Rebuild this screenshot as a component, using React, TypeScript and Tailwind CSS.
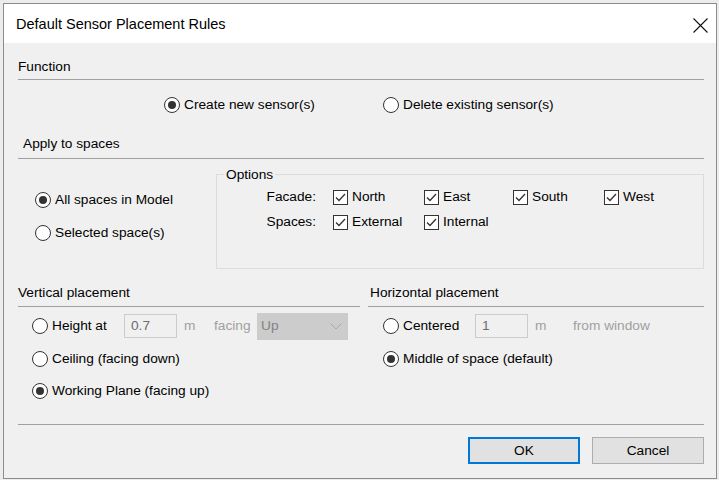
import React from "react";

function Radio({ checked, label, className = "" }: { checked?: boolean; label: string; className?: string }) {
  return (
    <div className={`flex items-center h-[18px] ${className}`}>
      <span className="w-[16px] h-[16px] rounded-full border border-[#333333] bg-white flex items-center justify-center shrink-0">
        {checked && <span className="w-[8px] h-[8px] rounded-full bg-[#333333]" />}
      </span>
      <span className="ml-[4px] whitespace-nowrap">{label}</span>
    </div>
  );
}

function Check({ label }: { label: string }) {
  return (
    <div className="flex items-center h-[18px]">
      <span className="w-[15px] h-[15px] border border-[#333333] bg-white flex items-center justify-center shrink-0">
        <svg width="13" height="13" viewBox="0 0 13 13">
          <path d="M2 6.5 L5 9.5 L11 3" fill="none" stroke="#333333" strokeWidth="1.3" />
        </svg>
      </span>
      <span className="ml-[4px] whitespace-nowrap">{label}</span>
    </div>
  );
}

function Separator({ className = "" }: { className?: string }) {
  return <div className={`h-px bg-[#a0a0a0] ${className}`} />;
}

export default function App() {
  return (
    <div
      className="w-[719px] h-[480px] bg-[#ececec] pt-[3px] pl-[3px] text-[13.7px] text-black"
      style={{ fontFamily: '"Liberation Sans", Arial, sans-serif' }}
    >
      <div className="w-[714px] h-[476px] border border-[#8c8c8c] flex flex-col">
        {/* Title bar */}
        <div className="h-[39px] bg-white flex items-center justify-between pl-[12px] pr-[8px] pt-[3px]">
          <span className="text-[14.5px]">Default Sensor Placement Rules</span>
          <svg width="15" height="15" viewBox="0 0 15 15">
            <path d="M0.5 0.5 L14.5 14.5 M14.5 0.5 L0.5 14.5" stroke="#111111" strokeWidth="1.1" />
          </svg>
        </div>

        {/* Body */}
        <div className="flex-1 bg-[#f0f0f0] pl-[14px] pr-[12px] flex flex-col leading-[18px]">
          <div className="mt-[15px]">Function</div>
          <Separator className="mt-[3px]" />
          <div className="mt-[16px] flex pl-[146px]">
            <Radio checked label="Create new sensor(s)" className="w-[219px]" />
            <Radio label="Delete existing sensor(s)" />
          </div>

          <div className="mt-[21px] pl-[5px]">Apply to spaces</div>
          <Separator className="mt-[5px]" />
          <div className="mt-[15px] flex">
            <div className="w-[198px] pl-[17px] flex flex-col">
              <Radio checked label="All spaces in Model" className="mt-[17px]" />
              <Radio label="Selected space(s)" className="mt-[15px]" />
            </div>
            <div className="w-[488px] h-[95px] border border-[#dcdcdc]">
              <div className="w-fit -mt-[9px] ml-[7px] px-[2px] bg-[#f0f0f0]">Options</div>
              <div className="mt-[4px] grid grid-cols-[116px_91px_89px_91px_1fr] gap-y-[7px]">
                <div className="pr-[17px] text-right">Facade:</div>
                <Check label="North" />
                <Check label="East" />
                <Check label="South" />
                <Check label="West" />
                <div className="pr-[17px] text-right">Spaces:</div>
                <Check label="External" />
                <Check label="Internal" />
              </div>
            </div>
          </div>

          <div className="mt-[15px] flex gap-[8px]">
            {/* Vertical placement */}
            <div className="w-[342px] flex flex-col">
              <div>Vertical placement</div>
              <Separator className="mt-[4px]" />
              <div className="mt-[7px] h-[24px] flex items-center pl-[14px]">
                <Radio label="Height at" className="w-[92px]" />
                <div className="w-[53px] h-[24px] border border-[#cccccc] pl-[6px] flex items-center text-[#6d6d6d]">0.7</div>
                <span className="ml-[7px] w-[30px] text-[#a0a0a0]">m</span>
                <span className="w-[43px] text-[#a0a0a0]">facing</span>
                <div className="w-[91px] h-[27px] bg-[#cccccc] flex items-center justify-between pl-[4px] pr-[6px] text-[#838383]">
                  <span>Up</span>
                  <svg width="12" height="7" viewBox="0 0 12 7">
                    <path d="M0.5 0.5 L6 6 L11.5 0.5" fill="none" stroke="#a8a8a8" strokeWidth="1" />
                  </svg>
                </div>
              </div>
              <div className="mt-[9px] h-[24px] flex items-center pl-[14px]">
                <Radio label="Ceiling (facing down)" />
              </div>
              <div className="mt-[8px] h-[24px] flex items-center pl-[14px]">
                <Radio checked label="Working Plane (facing up)" />
              </div>
            </div>

            {/* Horizontal placement */}
            <div className="flex-1 flex flex-col">
              <div className="pl-[2px]">Horizontal placement</div>
              <Separator className="mt-[4px]" />
              <div className="mt-[7px] h-[24px] flex items-center pl-[15px]">
                <Radio label="Centered" className="w-[92px]" />
                <div className="w-[53px] h-[24px] border border-[#cccccc] pl-[6px] flex items-center text-[#6d6d6d]">1</div>
                <span className="ml-[7px] w-[38px] text-[#a0a0a0]">m</span>
                <span className="text-[#a0a0a0]">from window</span>
              </div>
              <div className="mt-[9px] h-[24px] flex items-center pl-[15px]">
                <Radio checked label="Middle of space (default)" />
              </div>
            </div>
          </div>

          <Separator className="mt-[21px]" />
          <div className="mt-[12px] flex justify-end gap-[12px]">
            <button className="w-[112px] h-[27px] bg-[#e1e1e1] border-2 border-[#0078d7] flex items-center justify-center">
              OK
            </button>
            <button className="w-[112px] h-[27px] bg-[#e1e1e1] border border-[#adadad] flex items-center justify-center">
              Cancel
            </button>
          </div>
        </div>
      </div>
    </div>
  );
}
